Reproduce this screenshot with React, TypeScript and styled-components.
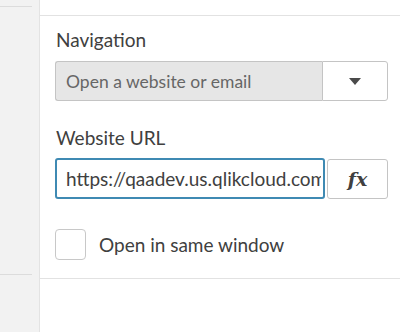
import React from "react";
import styled, { createGlobalStyle } from "styled-components";

const Global = createGlobalStyle`
  html, body { margin: 0; padding: 0; background: #fff; }
  body { font-family: Lato, "Open Sans", sans-serif; }
  * { box-sizing: border-box; }
`;

const Page = styled.div`
  display: flex;
  width: 400px;
  height: 332px;
  overflow: hidden;
`;

const SideList = styled.div`
  width: 40px;
  flex: none;
  background: #f2f2f2;
  border-right: 1px solid #e3e3e3;
  display: flex;
  flex-direction: column;
`;

const SideItem = styled.div<{ $h: number }>`
  height: ${(p) => p.$h}px;
  margin-right: 7px;
  border-bottom: 1px solid #dcdcdc;
  flex: none;
`;

const Panel = styled.div`
  flex: 1;
  display: flex;
  flex-direction: column;
  background: #fff;
`;

const PanelHeader = styled.div`
  height: 16px;
  border-bottom: 1px solid #e2e2e2;
  flex: none;
`;

const Section = styled.div`
  padding: 12px 12px 0 15px;
  height: 263px;
  border-bottom: 1px solid #e2e2e2;
  flex: none;
  display: flex;
  flex-direction: column;
`;

const Label = styled.div`
  font-size: 19px;
  color: #404040;
  line-height: 24px;
  margin-bottom: 9px;
  padding-left: 1px;
`;

const Field = styled.div<{ $gap?: number }>`
  display: flex;
  height: 40px;
  flex: none;
  margin-bottom: ${(p) => p.$gap ?? 25}px;
`;

const SelectValue = styled.div`
  flex: 1;
  background: #e6e6e6;
  border: 1px solid #c4c4c4;
  border-right: none;
  border-radius: 3px 0 0 3px;
  display: flex;
  align-items: center;
  padding-left: 10px;
  font-size: 17.5px;
  color: #666;
`;

const SelectButton = styled.div`
  width: 66px;
  border: 1px solid #c4c4c4;
  border-radius: 0 3px 3px 0;
  display: flex;
  align-items: center;
  justify-content: center;
  background: #fff;
`;

const Caret = styled.span`
  width: 0;
  height: 0;
  border-left: 6px solid transparent;
  border-right: 6px solid transparent;
  border-top: 7px solid #4a4a4a;
`;

const UrlInput = styled.input`
  flex: 1;
  min-width: 0;
  height: 41px;
  margin-top: -1px;
  border: 2px solid #3f8ab3;
  border-radius: 3px;
  padding: 0 2px 0 9px;
  font-family: inherit;
  font-size: 19px;
  color: #404040;
  outline: none;
  background: #fff;
`;

const FxButton = styled.button`
  width: 61px;
  margin-left: 2px;
  border: 1px solid #c4c4c4;
  border-radius: 3px;
  background: #fff;
  display: flex;
  align-items: center;
  justify-content: center;
  font-family: "DejaVu Serif", "Liberation Serif", serif;
  font-style: italic;
  font-weight: bold;
  font-size: 19px;
  color: #404040;
  padding: 0;
`;

const CheckRow = styled.label`
  display: flex;
  align-items: center;
  gap: 13px;
  margin-top: 5px;
  font-size: 19px;
  line-height: 24px;
  color: #404040;
`;

const CheckBox = styled.span`
  width: 31px;
  height: 31px;
  border: 1px solid #c8c8c8;
  border-radius: 4px;
  background: #fff;
  flex: none;
`;

export default function App() {
  return (
    <>
      <Global />
      <Page>
        <SideList>
          <SideItem $h={7} />
          <SideItem $h={268} />
        </SideList>
        <Panel>
          <PanelHeader />
          <Section>
            <Label>Navigation</Label>
            <Field>
              <SelectValue>Open a website or email</SelectValue>
              <SelectButton>
                <Caret />
              </SelectButton>
            </Field>
            <Label>Website URL</Label>
            <Field>
              <UrlInput readOnly value="https://qaadev.us.qlikcloud.com/sense/app" />
              <FxButton>fx</FxButton>
            </Field>
            <CheckRow>
              <CheckBox />
              Open in same window
            </CheckRow>
          </Section>
        </Panel>
      </Page>
    </>
  );
}
